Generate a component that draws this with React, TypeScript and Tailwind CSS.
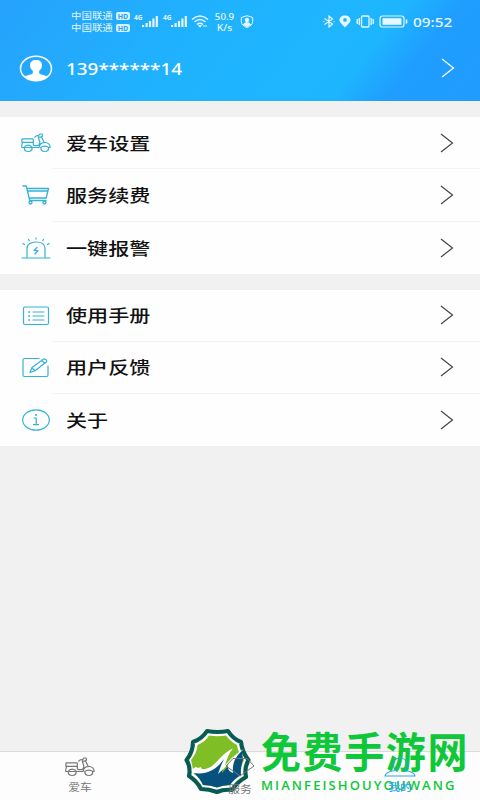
import type { ReactNode } from 'react';

const SANS = "font-['Noto_Sans','Noto_Sans_CJK_SC',sans-serif]";

const ScooterIcon = () => (
  <svg width="30" height="20" viewBox="0 0 30 20" fill="none" stroke="currentColor" strokeWidth="1.200" strokeLinejoin="round" strokeLinecap="round">
    <path d="M.9 6.700q0-.8.800-.8h9.800q.8 0 .8.800v2.600H.9z" />
    <path d="M1.800 9.300C.8 11 .6 12.800.7 14.500h2.500c1.500-3.200 6.500-3.200 8 0h6.800c.8-3.600 3.300-5.200 6-5 3 .2 5 2.200 5.200 4.800l-1.500.2M12.300 9.300v2c0 .9.700 1.300 1.500 1.300h2.700c1.800-.3 2.500-1.800 2.200-3.800L17.300 4M20.300 3.800l3 5.700M13.800 4.200c1-1.400 2.400-1.800 3.700-1.400L18.800 1h2.400l.3 2.300c-1.200.8-2.800.9-4 .6" />
    <path d="M3.200 14.500c0 2.400 1.600 4 4 4s4-1.600 4-4zM19.800 14.500c0 2.400 1.600 4 4 4s4-1.600 4-4c-2-1.800-6-1.800-8 0z" />
  </svg>
);

const CartIcon = () => (
  <svg width="28" height="20" viewBox="0 0 28 20" fill="none" stroke="currentColor" strokeWidth="1.300" strokeLinejoin="round" strokeLinecap="round">
    <path d="M1 1h3.200l3.600 14.500H24M5 3.500h21.500l-2.300 9.500H7.500M5.800 6h20" />
    <circle cx="8.500" cy="17.500" r="1.500" />
    <circle cx="22.500" cy="17.500" r="1.500" />
  </svg>
);

const AlarmIcon = () => (
  <svg width="30" height="22" viewBox="0 0 30 22" fill="none" stroke="currentColor" strokeWidth="1.200" strokeLinejoin="round" strokeLinecap="round">
    <path d="M1 21h28M6 21v-9.500C6 7.500 9.500 5 15 5s9 2.500 9 6.500V21M16 10.500l-3 3h4l-3 3.500" />
    <path d="M2 6.500l1.500 1M7.500 2.500l.8 1.200M15 .8v1.300M22.500 2.500l-.8 1.200M28 6.500l-1.500 1" />
  </svg>
);

const ManualIcon = () => (
  <svg width="28" height="20" viewBox="0 0 28 20" fill="none" stroke="currentColor" strokeWidth="1.200" strokeLinecap="round">
    <rect x="1.500" y="1" width="25" height="17.500" rx="1.500" />
    <path d="M11 6h11M11 10h11M11 14h11" />
    <path d="M6.700 6h.8M6.700 10h.8M6.700 14h.8" strokeWidth="1.500" />
  </svg>
);

const FeedbackIcon = () => (
  <svg width="28" height="21" viewBox="0 0 28 21" fill="none" stroke="currentColor" strokeWidth="1.200" strokeLinejoin="round" strokeLinecap="round">
    <path d="M17 1.500H2.500q-1.500 0-1.500 1.500v15q0 1.500 1.500 1.500H24.500q1.500 0 1.500-1.500V9" />
    <path d="M8 15.500l1.800-4.700L21.300 2.200c1.500-.8 4 .8 3.300 2.600L13 13.700zM19.500 3.600l3.500 2.600M9.800 10.800l3.200 2.900" />
  </svg>
);

const AboutIcon = () => (
  <svg width="29" height="22" viewBox="0 0 29 22" fill="none" stroke="currentColor" strokeWidth="1.200">
    <ellipse cx="14" cy="11" rx="13.300" ry="10.200" />
    <path d="M11.500 9h2.700v6.500M11 15.700h6" />
    <path d="M14 5v1.800" strokeWidth="1.800" />
  </svg>
);

const Chevron = () => (
  <svg width="14" height="20" viewBox="0 0 14 20" fill="none" stroke="currentColor" strokeWidth="1.200">
    <path d="M1 1l11.500 9L1 19" />
  </svg>
);

const Carrier = () => (
  <div className="flex h-[12px] items-center gap-[3px]">
    <span className="w-[42px] whitespace-nowrap text-[9px] leading-[12px]">
      <span className="inline-block origin-left scale-x-[1.160]">中国联通</span>
    </span>
    <span className="flex h-[8px] w-[14px] items-center justify-center rounded-[2px] bg-[#d8f2ff] text-[7px] font-bold leading-none text-[#26a5fb]">HD</span>
  </div>
);

const Signal = () => (
  <svg width="25" height="14" viewBox="0 0 25 14" fill="currentColor">
    <text x="0" y="6" fontSize="6.500" fontWeight="700" fontFamily="Noto Sans">4G</text>
    <path d="M8 11h2.200v2H8zM11.500 9h2.200v4h-2.200zM14.900 7h2.200v6h-2.200zM18.300 4.500h2.200V13h-2.200zM21.700 2h2.200v11h-2.200z" />
  </svg>
);

const StatusBar = () => (
  <div className="flex h-[42px] pl-[71px] text-[#e5f7ff]">
    <div className="flex w-[59px] shrink-0 flex-col pt-[10px]">
      <Carrier />
      <Carrier />
    </div>
    <div className="flex shrink-0 gap-[4px] pl-[4px] pt-[14px]">
      <Signal />
      <Signal />
    </div>
    <svg className="ml-[3px] mt-[15px] shrink-0" width="18" height="13" viewBox="0 0 18 13" fill="none" stroke="currentColor" strokeWidth="1.600">
      <path d="M1 4.500Q9-2.500 17 4.500M3.500 7Q9 2 14.500 7M6 9.500q3-2.500 6 0" />
      <path d="M7.500 10.500h3L9 12.200zM12 11h4" strokeWidth="1" fill="currentColor" />
    </svg>
    <div className="ml-[5px] w-[21px] shrink-0 whitespace-nowrap pt-[11px] text-center text-[9px] font-medium leading-[11px]">
      <div className="scale-x-[1.080]">50.9</div>
      <div className="scale-x-[1.150]">K/s</div>
    </div>
    <svg className="ml-[5px] mt-[15px] shrink-0" width="14" height="13" viewBox="0 0 14 13" fill="none" stroke="currentColor">
      <path d="M7 .7l5.700 1.800v4c0 3-2.500 4.800-5.700 6-3.200-1.200-5.700-3-5.700-6v-4z" />
      <circle cx="7" cy="5" r="1.800" fill="currentColor" />
      <path d="M3.500 9.500c1-2.500 6-2.500 7 0L7 11.500z" fill="currentColor" />
    </svg>
    <svg className="ml-[69px] mt-[15px] shrink-0" width="12" height="13" viewBox="0 0 12 13" fill="none" stroke="currentColor" strokeWidth="1.200">
      <path d="M1.500 3.500l8 5.500L6 12V1l3.500 3-8 5.500M10.500 6.500h1M.3 6.500h1" />
    </svg>
    <svg className="ml-[4px] mt-[15px] shrink-0" width="12" height="13" viewBox="0 0 12 13" fill="currentColor" fillRule="evenodd">
      <path d="M6 .5c3.300 0 5.500 2 5.500 4.500S8.500 9.500 6 12.500C3.500 9.500.5 7.500.5 5S2.700.5 6 .5zM6 3a1.900 1.900 0 1 0 0 3.800A1.900 1.900 0 0 0 6 3z" />
    </svg>
    <svg className="ml-[5px] mt-[15px] shrink-0" width="19" height="13" viewBox="0 0 19 13" fill="none" stroke="currentColor" strokeWidth="1.300">
      <rect x="5.500" y="1" width="7.500" height="11" rx="1" />
      <path d="M3.300 3v7M1 4l.5 1.500L1 7l.5 2M15.200 3v7M17.500 4l-.5 1.500.5 1.500-.5 2" />
    </svg>
    <svg className="ml-[4px] mt-[15px] shrink-0" width="29" height="13" viewBox="0 0 29 13" fill="none" stroke="currentColor" strokeWidth="1.200">
      <rect x="1" y="1" width="24" height="11" rx="2.500" />
      <path d="M3.500 3.200h19v6.600h-19z" fill="currentColor" stroke="none" />
      <path d="M27.500 4.500v4" strokeWidth="1.600" />
    </svg>
    <span className="ml-[5px] mt-[12px] h-[20px] origin-left scale-x-[1.180] text-[13px] font-medium leading-[20px]">09:52</span>
  </div>
);

const Header = () => (
  <header className="h-[101px] bg-[linear-gradient(128deg,#26a2fc_0%,#1fb3fe_42%,#1eb5ff_73%,#1f9eff_83%,#209cff_100%)] text-white">
    <StatusBar />
    <div className="flex h-[52px] items-center pl-[19px] pr-[25px]">
      <svg width="34" height="27" viewBox="0 0 34 27">
        <ellipse cx="17" cy="13.500" rx="15.500" ry="12.300" fill="none" stroke="#fff" strokeWidth="1.500" />
        <path d="M17 5c4 0 6 2 6 5.200 0 2.600-1.200 4.300-2.800 5.600v2.400c0 1.300 6 1.500 8 3.600C25.500 24.600 21.500 26 17 26S8.500 24.600 5.800 21.800c2-2.100 8-2.300 8-3.600v-2.400C12.200 14.500 11 12.800 11 10.200 11 7 13 5 17 5z" fill="#fff" />
      </svg>
      <span className="ml-[13px] mt-[2px] origin-left scale-x-[1.110] whitespace-nowrap text-[17px] font-medium">139******14</span>
      <span className="ml-auto">
        <Chevron />
      </span>
    </div>
  </header>
);

interface MenuItem {
  label: string;
  icon: ReactNode;
}

const carItems: MenuItem[] = [
  { label: '爱车设置', icon: <ScooterIcon /> },
  { label: '服务续费', icon: <CartIcon /> },
  { label: '一键报警', icon: <AlarmIcon /> },
];

const helpItems: MenuItem[] = [
  { label: '使用手册', icon: <ManualIcon /> },
  { label: '用户反馈', icon: <FeedbackIcon /> },
  { label: '关于', icon: <AboutIcon /> },
];

const MenuGroup = ({ items }: { items: MenuItem[] }) => (
  <section className="mt-[16px] h-[156.500px] bg-[#fefefe]">
    {items.map((item, index) => (
      <div key={item.label} className="flex h-[52.300px] pl-[20px]">
        <span className="flex w-[32px] items-center justify-center text-[#35b1d5]">{item.icon}</span>
        <div className={`flex flex-1 items-center pl-[14px] pr-[26px] ${index < items.length - 1 ? 'border-b border-[#f3f3f3]' : ''}`}>
          <span className="mt-[1px] origin-left scale-x-[1.240] whitespace-nowrap text-[17px] font-medium leading-none text-[#111]">{item.label}</span>
          <span className="ml-auto text-[#444]">
            <Chevron />
          </span>
        </div>
      </div>
    ))}
  </section>
);

const TabBar = () => (
  <nav className="relative z-10 grid h-[48px] grid-cols-3 text-[10px] leading-none text-[#777]">
    <div className="flex flex-col items-center pt-[5px]">
      <ScooterIcon />
      <span className="mt-[5px] scale-x-[1.180]">爱车</span>
    </div>
    <div className="flex flex-col items-center pt-[5px]">
      <svg width="30" height="20" viewBox="0 0 30 20" fill="none" stroke="currentColor">
        <path d="M8 1.500h14l7 7.500-14 10L1 9z" />
      </svg>
      <span className="mt-[7px] scale-x-[1.180]">服务</span>
    </div>
    <div className="flex flex-col items-center pt-[5px] text-[#2aa3e8]">
      <svg width="32" height="20" viewBox="0 0 32 20" fill="none" stroke="currentColor" strokeWidth="1.200">
        <path d="M12 13.500C10 12 9.500 9.500 9.500 7c0-3.500 2.500-6 6.500-6s6.500 2.500 6.500 6c0 2.500-.5 5-2.500 6.500M12 13.500C6 14 1.500 15.500 1 19h30c-.5-3.500-5-5-11-5.500" />
      </svg>
      <span className="mt-[5px] scale-x-[1.180] font-medium">我的</span>
    </div>
  </nav>
);

const Watermark = () => (
  <div className="absolute left-[184px] top-[728px] flex h-[72px]">
    <svg width="67" height="67" viewBox="0 0 67 67">
      <path
        d="M23 3Q33.500 5 44 3 49 11 57 14 58 24 64.500 32 60 40 62 49 53 54 48 62 40 61 33 64 25 61 17 61 13 53 5 48 7 39 2.500 32 9 24 9 14 18 11 23 3z"
        fill="#fff"
        stroke="#075b52"
        strokeWidth="4.200"
        strokeLinejoin="round"
      />
      <path d="M25 7.500Q34 9 42 7.500 47 14 53 17 54 25 60 32 56 40 57 47 50 51 46 57 39 57 33 59.500 27 57 19 57 16 50 10 46L7 32Q13 25 13.500 17 21 14 25 7.500z" fill="#80be26" />
      <path d="M9 44c13 3 24-4 32-16l-3 17L58 22l1 10q-3 8-2 15-7 4-11 10-7 0-13 2.500Q27 57 19 57q-3-7-10-13z" fill="#06527d" />
      <path d="M7.500 42l4-3 3 1 2-1 1.500 2C31 42 34 27 49 20.500c-5 6-6 11-8 17 6-7 11-12 19-16.500-8 7-12 13-11 24-4-1-6-4-4.500-9L34 46c2-6 4-11 6-15-8 11-17 16-31 14z" fill="#fff" />
    </svg>
    <div className="ml-[10px] w-[212px] whitespace-nowrap text-[#0fc83a]">
      <div className="mt-[2px] h-[43px] scale-y-[1.050] text-[40px] font-bold leading-[43px] tracking-[1.600px]">免费手游网</div>
      <div className="mt-[5px] font-['Open_Sans'] text-[13px] font-semibold leading-[14px] tracking-[2.100px]">MIANFEISHOUYOUWANG</div>
    </div>
  </div>
);

export default function App() {
  return (
    <div className={`relative flex h-[800px] w-[480px] flex-col overflow-hidden bg-[#f1f1f1] ${SANS}`}>
      <Header />
      <MenuGroup items={carItems} />
      <MenuGroup items={helpItems} />
      <div className="flex-1" />
      <div className="border-t border-[#dcdcdc] bg-[#fdfdfd]">
        <TabBar />
      </div>
      <Watermark />
    </div>
  );
}
